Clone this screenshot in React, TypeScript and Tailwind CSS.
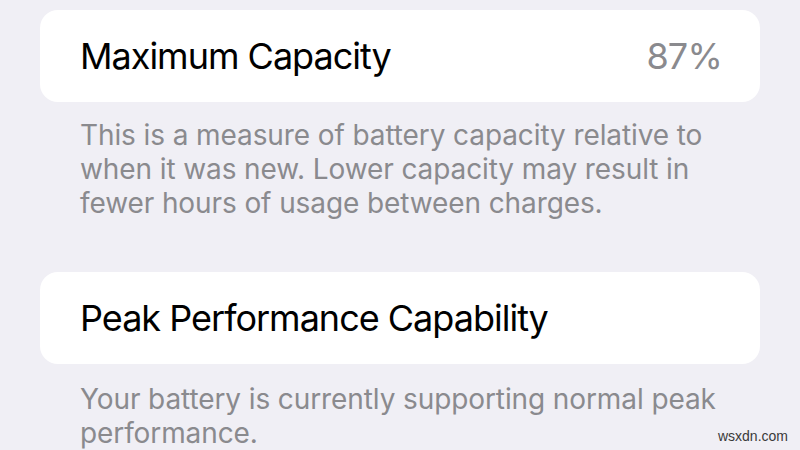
import React from "react";

type RowProps = {
  label: string;
  value?: string;
};

function SettingsRow({ label, value }: RowProps) {
  return (
    <div className="h-[92px] rounded-[18px] bg-white flex items-center justify-between pl-[40px] pr-[38px]">
      <span className="text-[36px] text-black tracking-[-1px] whitespace-nowrap">{label}</span>
      {value && (
        <span className="text-[36px] text-[#8a8a8e] tracking-[-0.8px]">{value}</span>
      )}
    </div>
  );
}

function Footnote({ children }: { children: React.ReactNode }) {
  return (
    <p className="px-[40px] text-[28px] leading-[34px] text-[#8a8a8e] whitespace-nowrap tracking-[-0.1px]">
      {children}
    </p>
  );
}

export default function App() {
  return (
    <main
      className="relative h-[450px] w-[800px] overflow-hidden bg-[#f0eff5] px-[40px] pt-[10px]"
      style={{ fontFamily: "Inter, 'Noto Sans', sans-serif" }}
    >
      <SettingsRow label="Maximum Capacity" value="87%" />
      <div className="mt-[16px]">
        <Footnote>
          This is a measure of battery capacity relative to
          <br />
          when it was new. Lower capacity may result in
          <br />
          fewer hours of usage between charges.
        </Footnote>
      </div>

      <div className="mt-[52px]">
        <SettingsRow label="Peak Performance Capability" />
      </div>
      <div className="mt-[18px]">
        <Footnote>
          Your battery is currently supporting normal peak
          <br />
          performance.
        </Footnote>
      </div>

      <span className="absolute right-[12px] bottom-[3px] text-[14px] text-[#3a3a3a] font-['Liberation_Sans',sans-serif]">
        wsxdn.com
      </span>
    </main>
  );
}
